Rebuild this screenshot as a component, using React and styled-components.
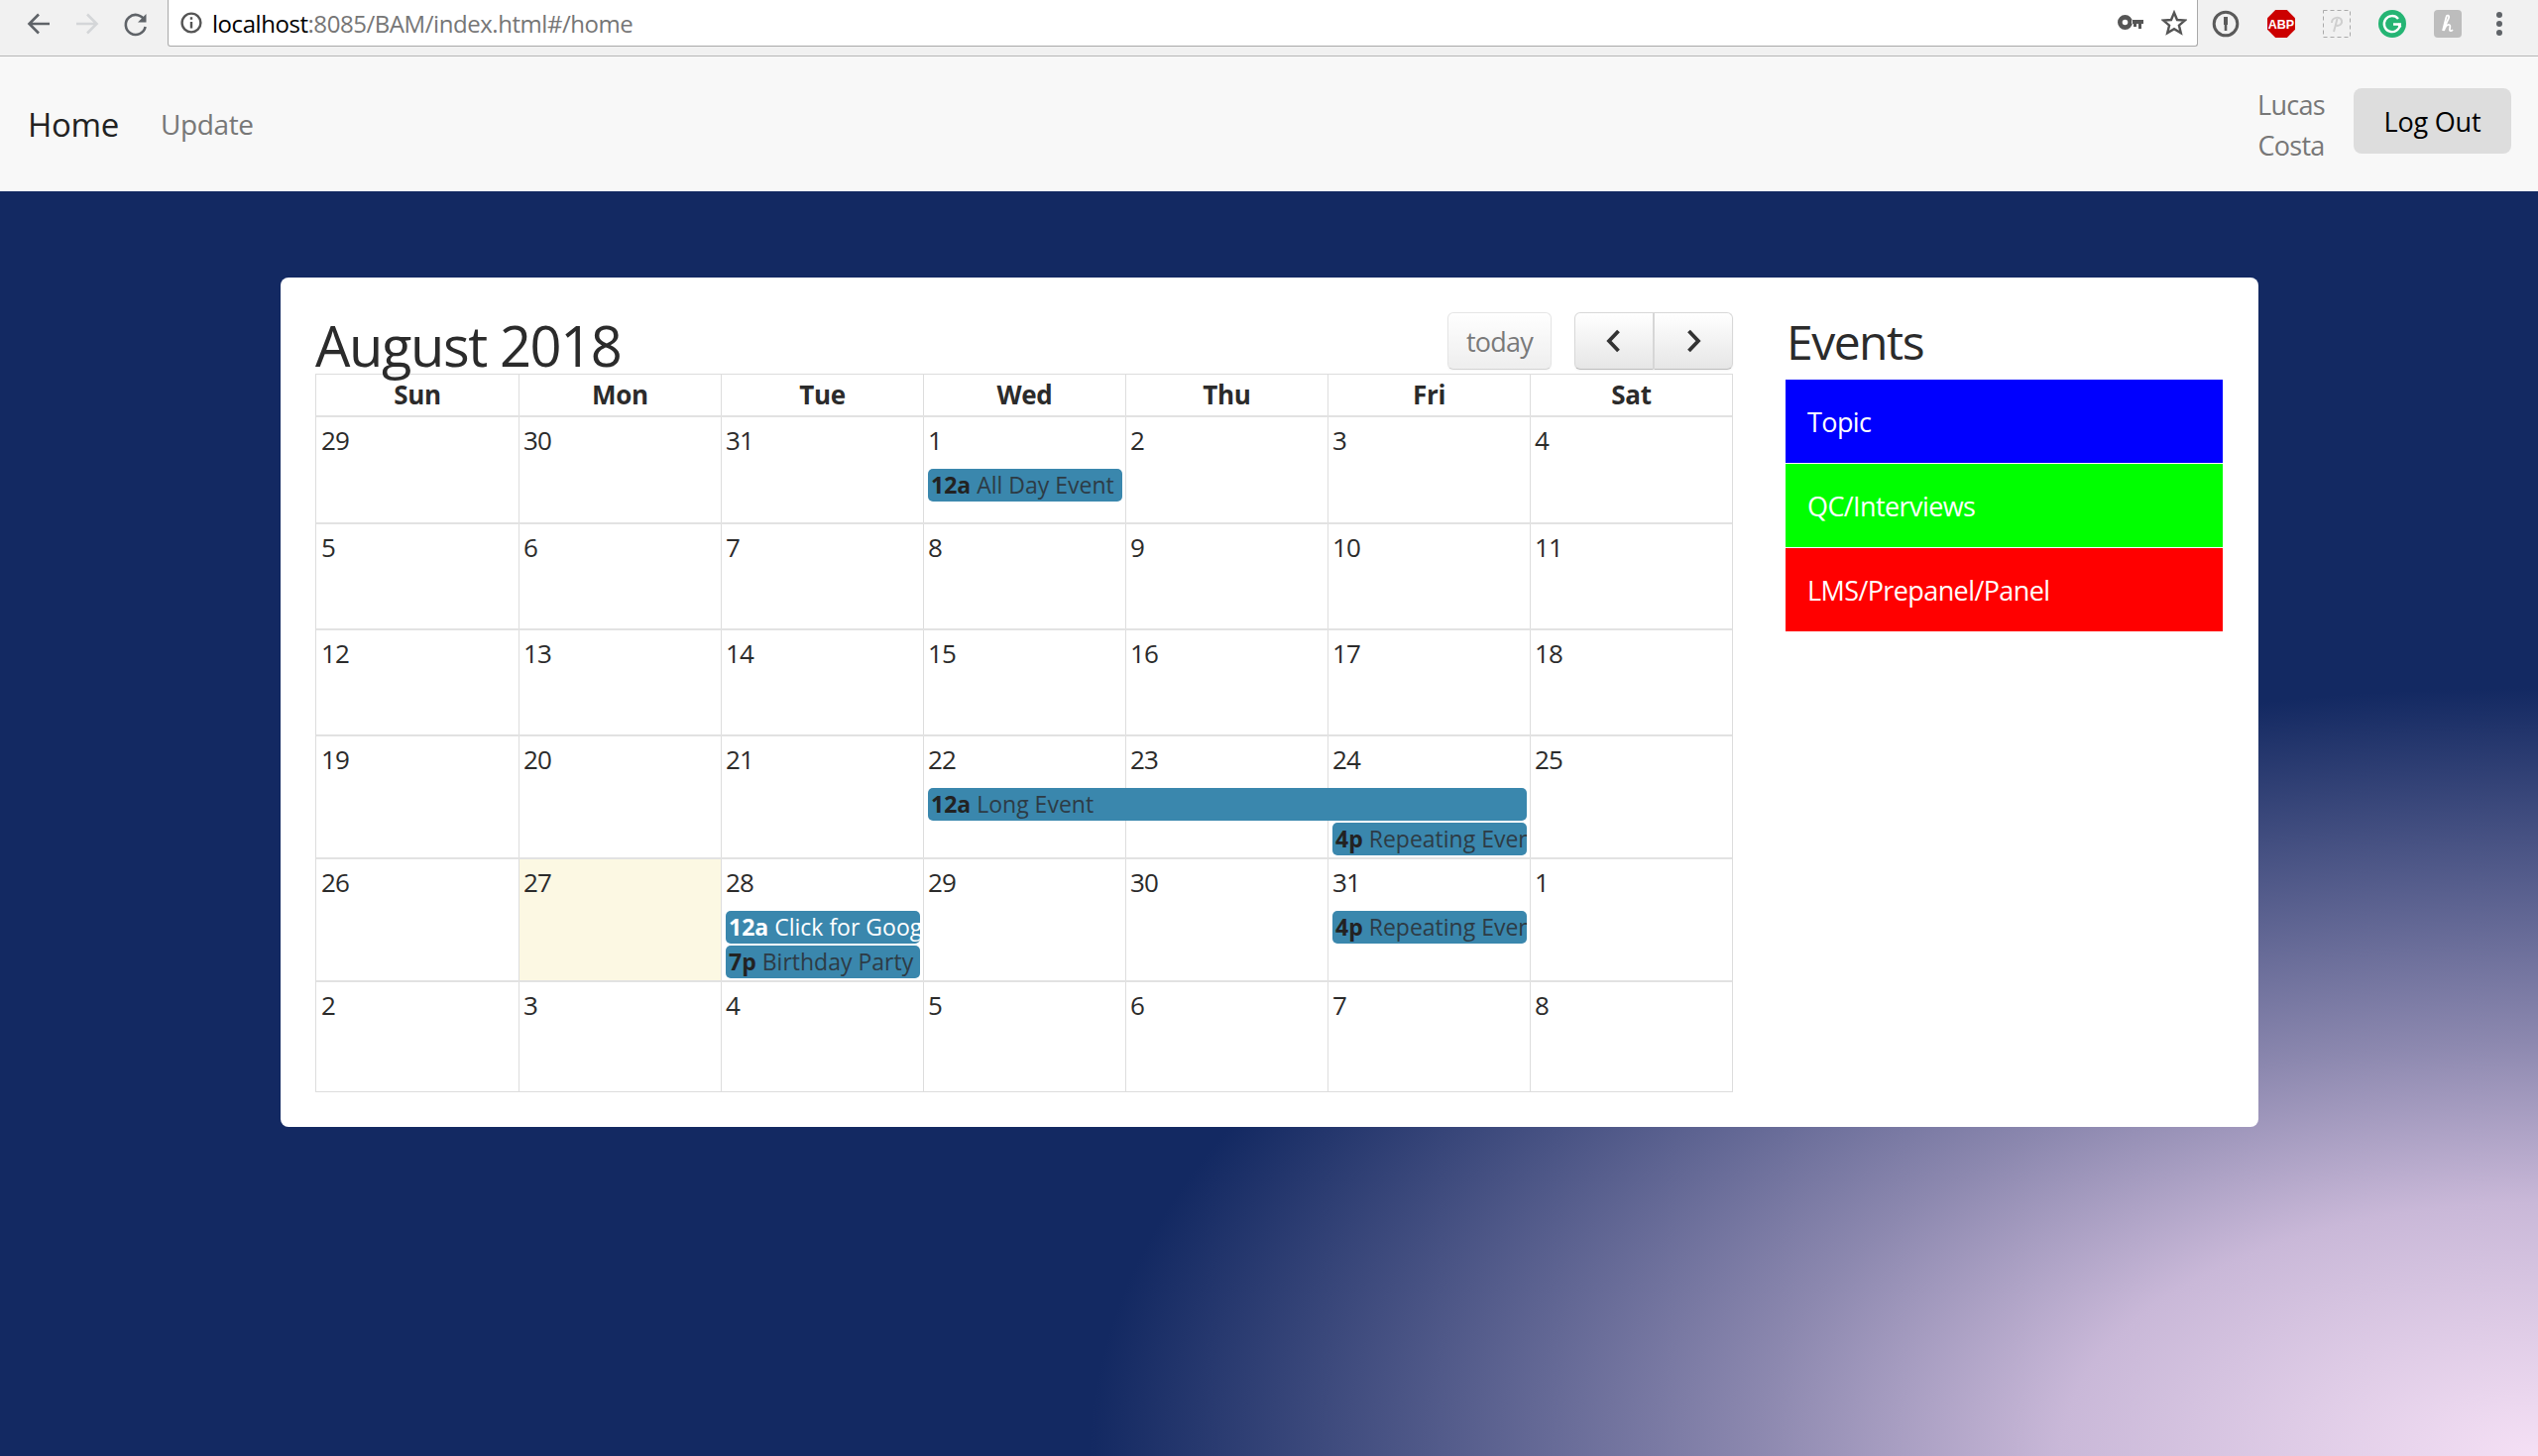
import styled, { createGlobalStyle } from "styled-components"

const GlobalStyle = createGlobalStyle`
  html, body { margin: 0; padding: 0; height: 100%; overflow: hidden; }
  body { font-family: "Open Sans", "Liberation Sans", sans-serif; color: #333; }
  * { box-sizing: border-box; }
`

const Page = styled.div`
  width: 2560px;
  height: 1469px;
  display: flex;
  flex-direction: column;
  overflow: hidden;
`

/* browser chrome */
const BrowserBar = styled.div`
  height: 57px;
  flex: none;
  display: flex;
  align-items: flex-start;
  background: #f1f1f1;
  border-bottom: 1px solid #b6b6b6;
`
const NavIcons = styled.div`
  width: 169px;
  height: 47px;
  flex: none;
  display: flex;
  align-items: center;
  padding-left: 25px;
  gap: 21px;
`
const UrlBox = styled.div`
  width: 2048px;
  height: 47px;
  flex: none;
  display: flex;
  align-items: center;
  padding: 0 10px 0 12px;
  background: #fff;
  border: 1px solid #a9a9a9;
  border-top: none;
  border-radius: 0 0 3px 3px;
`
const UrlText = styled.div`
  margin-left: 10px;
  flex: 1;
  font-size: 24px;
  letter-spacing: -0.45px;
  color: #767676;
  span { color: #000; }
`
const UrlActions = styled.div`
  display: flex;
  align-items: center;
  gap: 18px;
`
const Extensions = styled.div`
  flex: 1;
  height: 47px;
  display: flex;
  align-items: center;
  padding-left: 14px;
  gap: 28px;
`
const MenuDots = styled.svg`
  margin-left: 6px;
`

/* navbar */
const Navbar = styled.nav`
  height: 136px;
  flex: none;
  display: flex;
  align-items: center;
  background: #f8f8f8;
  padding: 0 27px 0 28px;
`
const Brand = styled.a`
  font-size: 33px;
  letter-spacing: -0.3px;
  color: #222;
`
const NavLink = styled.a`
  margin-left: 42px;
  font-size: 28px;
  letter-spacing: -0.4px;
  color: #777;
`
const UserName = styled.div`
  margin-left: auto;
  margin-top: 1px;
  width: 68px;
  font-size: 27px;
  line-height: 41px;
  letter-spacing: -0.7px;
  color: #777;
  text-align: center;
`
const LogOut = styled.button`
  margin-left: 29px;
  margin-bottom: 6px;
  width: 159px;
  height: 66px;
  border: none;
  border-radius: 8px;
  background: #ddd;
  color: #000;
  font-family: "Open Sans", sans-serif;
  font-size: 27px;
  letter-spacing: -0.2px;
`

/* main */
const Main = styled.main`
  flex: 1;
  padding: 87px 282px 0 283px;
  background: radial-gradient(
    ellipse 1460px 775px at 100% 100%,
    #f5e0f5 0%,
    #c9b8d8 33%,
    #8c88af 54%,
    #132962 100%
  ), #132962;
`
const Card = styled.div`
  display: flex;
  align-items: flex-start;
  padding: 35px 36px 35px 35px;
  background: #fff;
  border-radius: 8px;
`
const CalendarWrap = styled.div`
  width: 1430px;
  flex: none;
`
const Toolbar = styled.div`
  height: 62px;
  display: flex;
  align-items: flex-start;
  justify-content: space-between;
`
const MonthTitle = styled.h2`
  margin: 0;
  height: 62px;
  font-size: 56px;
  line-height: 66px;
  font-weight: 500;
  letter-spacing: -1.4px;
  color: #2b2b2b;
  white-space: nowrap;
`
const Buttons = styled.div`
  display: flex;
  gap: 23px;
`
const FcButton = styled.button`
  height: 58px;
  width: ${(p) => p.$w}px;
  display: flex;
  align-items: center;
  justify-content: center;
  padding: 0;
  font-family: "Open Sans", sans-serif;
  font-size: 27px;
  letter-spacing: -0.8px;
  color: #333;
  border: 1.5px solid #d8d8d8;
  border-bottom-color: #bdbdbd;
  border-radius: ${(p) => p.$radius || "6px"};
  background: linear-gradient(#fff, #e6e6e6);
  box-shadow: inset 0 1px 0 rgba(255, 255, 255, 0.2), 0 1px 2px rgba(0, 0, 0, 0.05);
  opacity: ${(p) => (p.$disabled ? 0.65 : 1)};
`
const ButtonGroup = styled.div`
  display: flex;
`

const HeaderRow = styled.div`
  height: 42px;
  display: grid;
  grid-template-columns: repeat(7, 1fr);
  border: 1px solid #ddd;
  border-bottom: none;
`
const HeaderCell = styled.div`
  font-size: 26px;
  font-weight: 700;
  line-height: 40px;
  letter-spacing: -0.3px;
  text-align: center;
  color: #2b2b2b;
  border-left: ${(p) => (p.$first ? "none" : "1px solid #ddd")};
`
const Weeks = styled.div`
  border: 1px solid #ddd;
  border-top: none;
`
const Week = styled.div`
  height: ${(p) => p.$h}px;
  display: grid;
  grid-template-columns: repeat(7, 1fr);
  grid-template-rows: 52px 35px 1fr;
  border-top: 2px solid #e2e2e2;
`
const DayBg = styled.div`
  grid-column: ${(p) => p.$col};
  grid-row: 1 / -1;
  background: ${(p) => (p.$today ? "#fcf8e3" : "transparent")};
  border-left: ${(p) => (p.$col === 1 ? "none" : "1px solid #ddd")};
`
const DayNum = styled.div`
  grid-column: ${(p) => p.$col};
  grid-row: 1;
  padding: 5px 0 0 5px;
  font-size: 26px;
  line-height: 36px;
  letter-spacing: -0.9px;
  color: #2b2b2b;
`
const EventBar = styled.div`
  grid-column: ${(p) => p.$col} / span ${(p) => p.$span || 1};
  grid-row: ${(p) => p.$row};
  height: 33px;
  margin: 0 3px 0 5px;
  padding: 0 4px 0 3px;
  background: #3a87ad;
  border-radius: 5px;
  overflow: hidden;
  white-space: nowrap;
  font-size: 23px;
  line-height: 32px;
  letter-spacing: 0;
  color: ${(p) => (p.$light ? "#fff" : "#2d3b45")};
  b { font-weight: 700; margin-right: 6px; color: ${(p) => (p.$light ? "#fff" : "#222")}; }
`

/* sidebar */
const Sidebar = styled.aside`
  flex: 1;
  margin-left: 53px;
`
const SideTitle = styled.h2`
  margin: 0 0 0 1px;
  height: 68px;
  font-size: 48px;
  line-height: 60px;
  font-weight: 500;
  letter-spacing: -1.5px;
  color: #2b2b2b;
`
const EventItem = styled.div`
  height: 84px;
  margin-bottom: 1px;
  padding-left: 22px;
  display: flex;
  align-items: center;
  background: ${(p) => p.$bg};
  color: #fff;
  font-size: 27px;
  letter-spacing: -0.6px;
`

const Stroke = ({ children, size = 28, color = "#5f6368", width = 2.6 }) => (
  <svg width={size} height={size} viewBox="0 0 28 28" fill="none" stroke={color} strokeWidth={width}>
    {children}
  </svg>
)

const days = ["Sun", "Mon", "Tue", "Wed", "Thu", "Fri", "Sat"]

const weeks = [
  { h: 108, nums: [29, 30, 31, 1, 2, 3, 4], events: [{ col: 4, row: 2, time: "12a", title: "All Day Event" }] },
  { h: 107, nums: [5, 6, 7, 8, 9, 10, 11], events: [] },
  { h: 107, nums: [12, 13, 14, 15, 16, 17, 18], events: [] },
  {
    h: 124,
    nums: [19, 20, 21, 22, 23, 24, 25],
    events: [
      { col: 4, span: 3, row: 2, time: "12a", title: "Long Event" },
      { col: 6, row: 3, time: "4p", title: "Repeating Event" },
    ],
  },
  {
    h: 124,
    today: 2,
    nums: [26, 27, 28, 29, 30, 31, 1],
    events: [
      { col: 3, row: 2, time: "12a", title: "Click for Google", light: true },
      { col: 3, row: 3, time: "7p", title: "Birthday Party" },
      { col: 6, row: 2, time: "4p", title: "Repeating Event" },
    ],
  },
  { h: 112, nums: [2, 3, 4, 5, 6, 7, 8], events: [] },
]

const topics = [
  { name: "Topic", bg: "#0000ff" },
  { name: "QC/Interviews", bg: "#00ff00" },
  { name: "LMS/Prepanel/Panel", bg: "#ff0000" },
]

const App = () => {
  return (
    <Page>
      <GlobalStyle />
      <BrowserBar>
        <NavIcons>
          <Stroke>
            <path d="M25 14H5M14 4.5 4.5 14l9.5 9.5" />
          </Stroke>
          <Stroke color="#d4d6d8">
            <path d="M3 14h20M14 4.5l9.5 9.5-9.5 9.5" />
          </Stroke>
          <Stroke>
            <path d="M23 11a10 10 0 1 0 .6 6" />
            <path d="M24.5 4v8.5H16" fill="#5f6368" stroke="none" />
          </Stroke>
        </NavIcons>
        <UrlBox>
          <svg width="22" height="22" viewBox="0 0 22 22" fill="none" stroke="#555" strokeWidth="2.4">
            <circle cx="11" cy="11" r="9.4" />
            <path d="M11 10v6.5M11 5.2v2.6" />
          </svg>
          <UrlText>
            <span>localhost</span>:8085/BAM/index.html#/home
          </UrlText>
          <UrlActions>
            <svg width="26" height="16" viewBox="0 0 26 16" fill="#555">
              <path d="M7.5 0a7.5 7.5 0 1 1-0 15 7.5 7.5 0 0 1 0-15Zm0 4.7a2.8 2.8 0 1 0 0 5.6 2.8 2.8 0 0 0 0-5.6ZM14 5h12v4h-2v5h-3V9h-2v3h-3V9h-2Z" fillRule="evenodd" />
            </svg>
            <svg width="26" height="26" viewBox="0 0 26 26" fill="none" stroke="#555" strokeWidth="2.4">
              <path d="M13 2.8l3 7.2 7.8.6-5.9 5 1.9 7.6-6.8-4.1-6.8 4.1 1.9-7.6-5.9-5 7.8-.6Z" />
            </svg>
          </UrlActions>
        </UrlBox>
        <Extensions>
          <svg width="28" height="28" viewBox="0 0 28 28" fill="none" stroke="#5a5a5a">
            <circle cx="14" cy="14" r="11.8" strokeWidth="3" />
            <path d="M14 7v8" strokeWidth="4" />
            <path d="M14 15v6" strokeWidth="2.6" />
          </svg>
          <svg width="28" height="28" viewBox="0 0 28 28">
            <path d="M8.2 0h11.6L28 8.2v11.6L19.8 28H8.2L0 19.8V8.2Z" fill="#cc0000" />
            <text x="14" y="19" textAnchor="middle" fontFamily="Liberation Sans, sans-serif" fontSize="12.5" fontWeight="700" fill="#fff">ABP</text>
          </svg>
          <svg width="28" height="28" viewBox="0 0 28 28" fill="none">
            <rect x="0.5" y="0.5" width="27" height="27" stroke="#aaa" strokeDasharray="4 3" />
            <path d="M11 22 14.5 9M9 13c0-6 9-7 10-2 .8 4-4 6-6 4" stroke="#cfcfcf" strokeWidth="2" />
          </svg>
          <svg width="28" height="28" viewBox="0 0 28 28" fill="none">
            <circle cx="14" cy="14" r="14" fill="#25b574" />
            <path d="M20 9a8 8 0 1 0 1.8 5.5H15" stroke="#fff" strokeWidth="2.4" />
            <path d="M20 14l2.5 3.5" stroke="#fff" strokeWidth="2.2" />
          </svg>
          <svg width="28" height="28" viewBox="0 0 28 28" fill="none">
            <rect width="28" height="28" rx="4" fill="#bdbdbd" />
            <path d="M9 21 12.5 7c.5-2.5 3.5-1.5 2.5 1-1 3-4 7-5 13 1.5-4 3.5-6.500 5.500-6 2 .5 0 4 .5 5.500.3 1 2 .8 3-.5" stroke="#fff" strokeWidth="1.8" />
          </svg>
          <MenuDots width="8" height="28" viewBox="0 0 8 28" fill="#5f6368">
            <circle cx="4" cy="5" r="3" />
            <circle cx="4" cy="14" r="3" />
            <circle cx="4" cy="23" r="3" />
          </MenuDots>
        </Extensions>
      </BrowserBar>

      <Navbar>
        <Brand>Home</Brand>
        <NavLink>Update</NavLink>
        <UserName>Lucas Costa</UserName>
        <LogOut>Log Out</LogOut>
      </Navbar>

      <Main>
        <Card>
          <CalendarWrap>
            <Toolbar>
              <MonthTitle>August 2018</MonthTitle>
              <Buttons>
                <FcButton $w={105} $disabled>today</FcButton>
                <ButtonGroup>
                  <FcButton $w={80} $radius="6px 0 0 6px">
                    <svg width="20" height="26" viewBox="0 0 20 26" fill="none" stroke="#333" strokeWidth="3.8">
                      <path d="M14.500 3 5 13l9.500 10" />
                    </svg>
                  </FcButton>
                  <FcButton $w={80} $radius="0 6px 6px 0">
                    <svg width="20" height="26" viewBox="0 0 20 26" fill="none" stroke="#333" strokeWidth="3.8">
                      <path d="M5.500 3 15 13 5.500 23" />
                    </svg>
                  </FcButton>
                </ButtonGroup>
              </Buttons>
            </Toolbar>
            <HeaderRow>
              {days.map((d, i) => (
                <HeaderCell key={d} $first={i === 0}>{d}</HeaderCell>
              ))}
            </HeaderRow>
            <Weeks>
              {weeks.map((w, i) => (
                <Week key={i} $h={w.h}>
                  {w.nums.map((n, j) => (
                    <DayBg key={"bg" + j} $col={j + 1} $today={w.today === j + 1} />
                  ))}
                  {w.nums.map((n, j) => (
                    <DayNum key={"n" + j} $col={j + 1}>{n}</DayNum>
                  ))}
                  {w.events.map((e, j) => (
                    <EventBar key={"e" + j} $col={e.col} $span={e.span} $row={e.row} $light={e.light}>
                      <b>{e.time}</b>{e.title}
                    </EventBar>
                  ))}
                </Week>
              ))}
            </Weeks>
          </CalendarWrap>
          <Sidebar>
            <SideTitle>Events</SideTitle>
            {topics.map((t) => (
              <EventItem key={t.name} $bg={t.bg}>{t.name}</EventItem>
            ))}
          </Sidebar>
        </Card>
      </Main>
    </Page>
  )
}

export default App
